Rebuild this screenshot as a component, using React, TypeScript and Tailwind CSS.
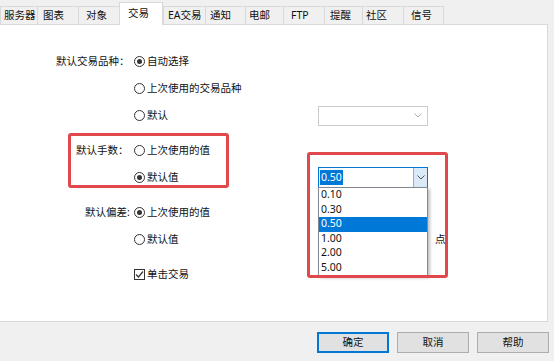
import React from "react";

const tabs = [
  { label: "服务器", w: "w-[37px] pl-[3px]" },
  { label: "图表", w: "w-[41px] pl-[5px]" },
  { label: "对象", w: "w-[41px] pl-[7px]" },
  { label: "交易", w: "w-[44px] pl-[8px]", active: true },
  { label: "EA交易", w: "w-[42px] pl-[4px]" },
  { label: "通知", w: "w-[40px] pl-[4px]" },
  { label: "电邮", w: "w-[38px] pl-[3px]" },
  { label: "FTP", w: "w-[41px] pl-[7px]" },
  { label: "提醒", w: "w-[38px] pl-[5px]" },
  { label: "社区", w: "w-[41px] pl-[3px]" },
  { label: "信号", w: "w-[41px] pl-[7px]" },
];

const lots = ["0.10", "0.30", "0.50", "1.00", "2.00", "5.00"];

function Radio({ checked }: { checked?: boolean }) {
  return (
    <span className="w-[11px] h-[11px] shrink-0 rounded-full border border-[#333333] bg-white flex items-center justify-center">
      {checked && <span className="w-[5px] h-[5px] rounded-full bg-[#333333]" />}
    </span>
  );
}

function Chevron({ color }: { color: string }) {
  return (
    <svg width="8" height="5" viewBox="0 0 8 5">
      <path d="M0.5 0.5 L4 4 L7.5 0.5" fill="none" stroke={color} strokeWidth="1" />
    </svg>
  );
}

export default function App() {
  return (
    <div className="w-[554px] h-[361px] bg-[#f0f0f0] overflow-hidden text-[10.5px] text-[#111] font-['Noto_Sans','Noto_Sans_CJK_SC',sans-serif]">
      {/* tabs */}
      <div className="relative z-10 flex items-end h-[24px]">
        {tabs.map((t) =>
          t.active ? (
            <div
              key={t.label}
              className={`${t.w} h-[23px] -mb-px bg-white border border-b-0 border-[#d9d9d9] flex pt-[3px] shrink-0 whitespace-nowrap`}
            >
              {t.label}
            </div>
          ) : (
            <div
              key={t.label}
              className={`${t.w} h-[18px] border-t border-l border-[#d9d9d9] bg-[#f0f0f0] flex items-center shrink-0 whitespace-nowrap last:border-r`}
            >
              {t.label}
            </div>
          )
        )}
      </div>

      {/* panel */}
      <div className="w-[548px] h-[298px] bg-white border border-l-0 border-[#d9d9d9] flex flex-col pt-[23px]">
        <div className="flex items-center h-[27px]">
          <span className="w-[134px] pl-[56px] shrink-0 whitespace-nowrap">默认交易品种：</span>
          <Radio checked />
          <span className="ml-[2px]">自动选择</span>
        </div>
        <div className="flex items-center h-[27px]">
          <span className="w-[134px] shrink-0" />
          <Radio />
          <span className="ml-[2px]">上次使用的交易品种</span>
        </div>
        <div className="flex items-center h-[27px]">
          <div className="w-[318px] shrink-0 flex items-center">
            <span className="w-[134px] shrink-0" />
            <Radio />
            <span className="ml-[2px]">默认</span>
          </div>
          <div className="w-[110px] h-[20px] border border-[#cccccc] bg-white flex items-center justify-end pr-[5px]">
            <Chevron color="#b0b0b0" />
          </div>
        </div>

        {/* lots */}
        <div className="flex items-end mt-[4px]">
          <div className="ml-[68px] w-[161px] h-[55px] shrink-0 border-[3px] border-[#e0484c] rounded-[3px] flex flex-col pt-[8px] gap-[14px]">
            <div className="flex items-center h-[13px]">
              <span className="w-[63px] pl-[5px] shrink-0 whitespace-nowrap">默认手数：</span>
              <Radio />
              <span className="ml-[2px] whitespace-nowrap">上次使用的值</span>
            </div>
            <div className="flex items-center h-[13px]">
              <span className="w-[63px] shrink-0" />
              <Radio checked />
              <span className="ml-[2px]">默认值</span>
            </div>
          </div>
          <div className="relative ml-[89px] w-[110px] h-[21px] border border-[#0078d7] bg-white flex">
            <div className="flex-1 flex items-center pl-[1px]">
              <span className="bg-[#0078d7] text-white px-[1px] leading-[15px]">0.50</span>
            </div>
            <div className="w-[14px] bg-[#dbeaf8] border-l border-[#7eb4ea] flex items-center justify-center">
              <Chevron color="#555555" />
            </div>
            <div className="absolute left-[-1px] top-full w-[110px] border border-[#828790] bg-white shadow-[2px_2px_3px_rgba(0,0,0,0.25)] z-20">
              {lots.map((v) => (
                <div
                  key={v}
                  className={`h-[14.5px] pl-[2px] flex items-center ${v === "0.50" ? "bg-[#0078d7] text-white" : ""}`}
                >
                  {v}
                </div>
              ))}
            </div>
            <div className="absolute left-[-12px] top-[-16px] w-[141px] h-[126px] border-[3px] border-[#e0484c] rounded-[3px] pointer-events-none z-30" />
          </div>
        </div>

        {/* deviation */}
        <div className="flex items-center h-[27px] mt-[11px]">
          <span className="w-[134px] pl-[85px] shrink-0 whitespace-nowrap">默认偏差:</span>
          <Radio checked />
          <span className="ml-[2px]">上次使用的值</span>
        </div>
        <div className="flex items-center h-[27px]">
          <div className="w-[318px] shrink-0 flex items-center">
            <span className="w-[134px] shrink-0" />
            <Radio />
            <span className="ml-[2px]">默认值</span>
          </div>
          <div className="w-[110px] h-[20px] border border-[#7a7a7a] bg-white" />
          <span className="ml-[7px]">点</span>
        </div>
        <div className="flex items-center h-[27px] mt-[8px]">
          <span className="w-[134px] shrink-0" />
          <span className="w-[11px] h-[11px] shrink-0 border border-[#333333] bg-white flex items-center justify-center">
            <svg width="9" height="9" viewBox="0 0 9 9">
              <path d="M1 4.5 L3.5 7 L8 1.5" fill="none" stroke="#333333" strokeWidth="1.2" />
            </svg>
          </span>
          <span className="ml-[2px]">单击交易</span>
        </div>
      </div>

      {/* buttons */}
      <div className="flex justify-end gap-[8px] pr-[5px] mt-[10px]">
        <button className="w-[72px] h-[21px] bg-[#e1e1e1] border-2 border-[#0078d7] flex items-center justify-center">
          确定
        </button>
        <button className="w-[72px] h-[21px] bg-[#e1e1e1] border border-[#adadad] flex items-center justify-center">
          取消
        </button>
        <button className="w-[72px] h-[21px] bg-[#e1e1e1] border border-[#adadad] flex items-center justify-center">
          帮助
        </button>
      </div>
    </div>
  );
}
